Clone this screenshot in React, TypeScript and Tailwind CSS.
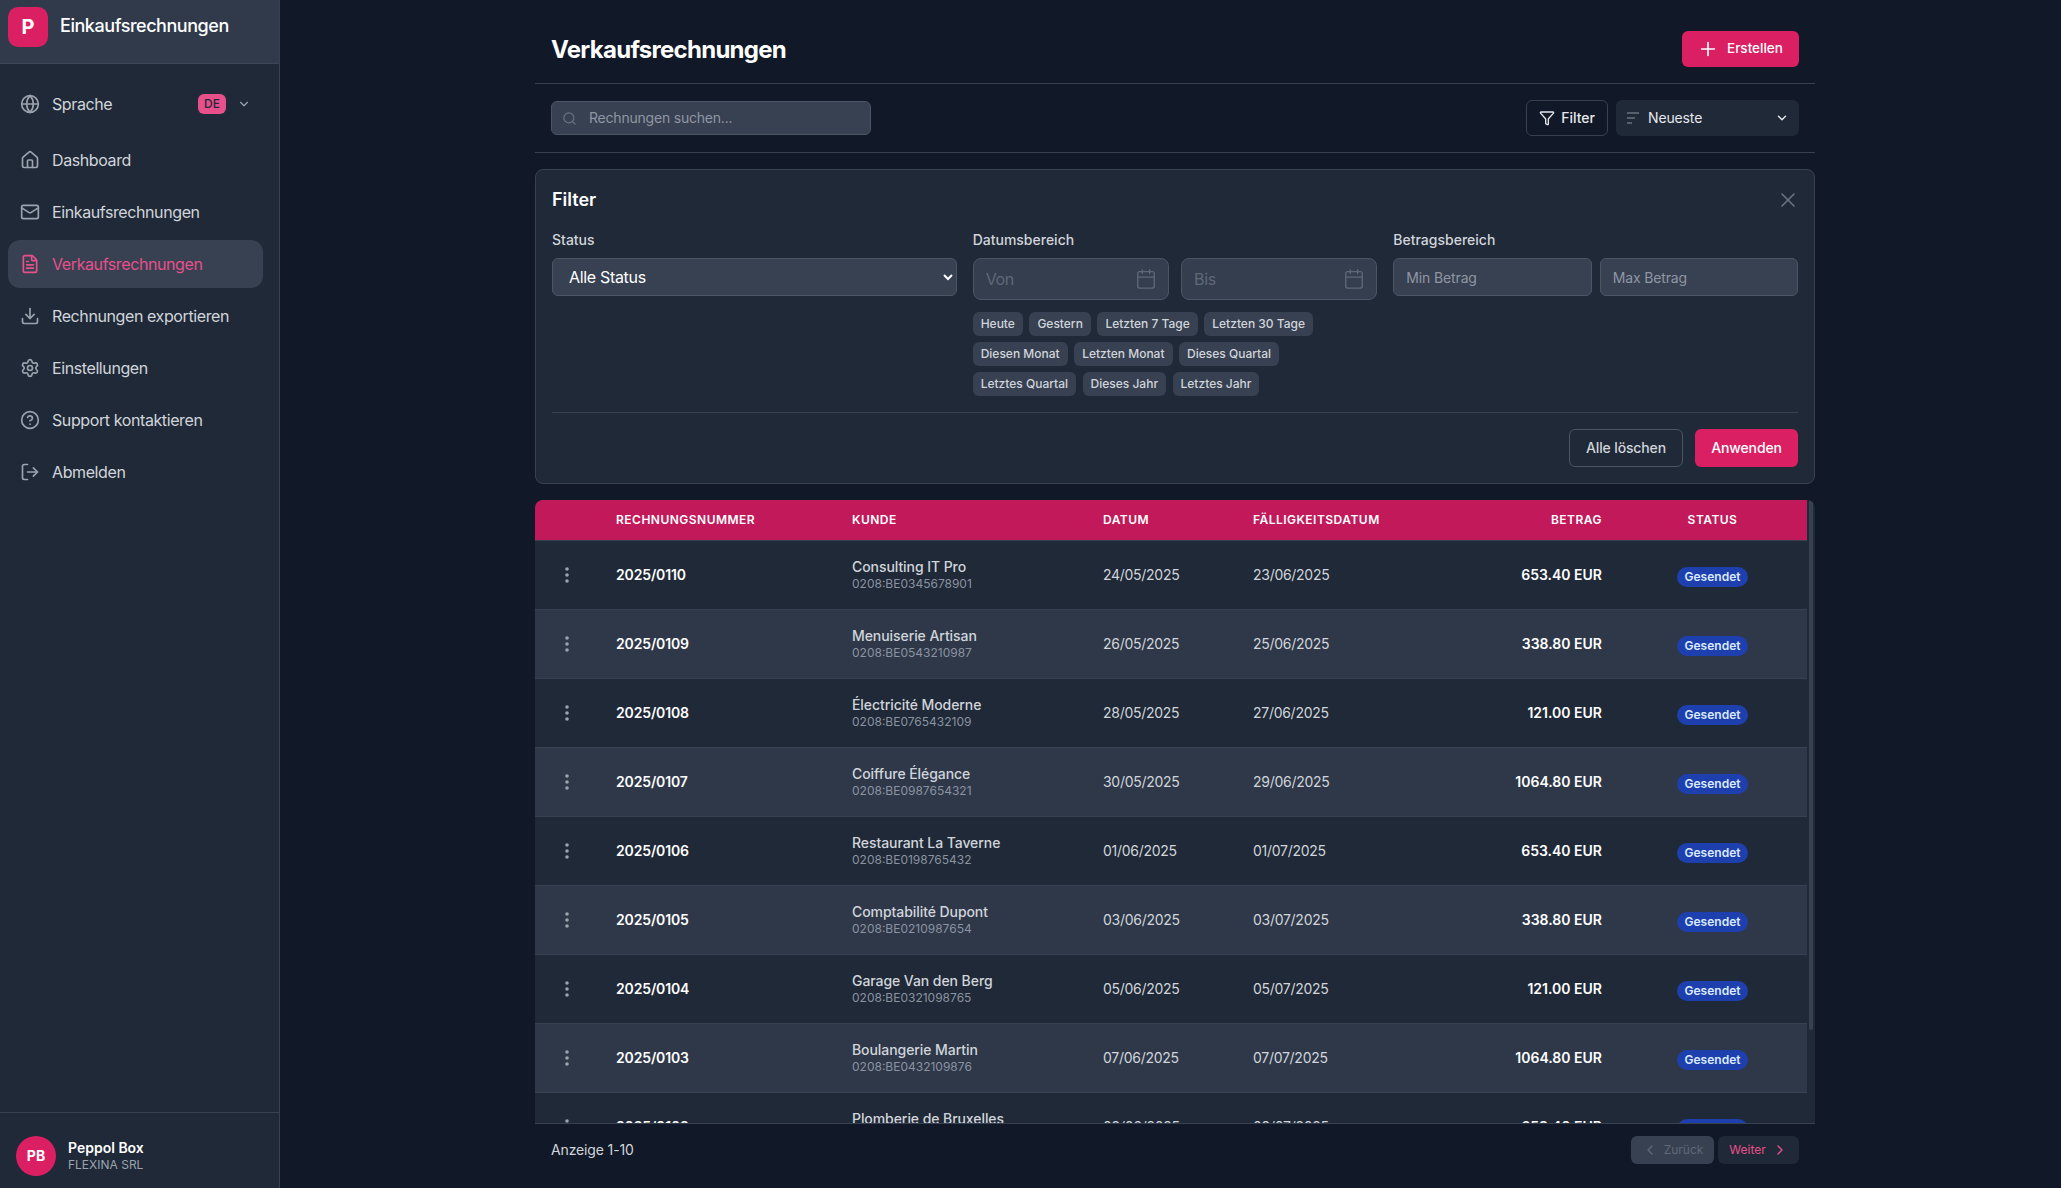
import {
  Calendar,
  ChevronDown,
  ChevronLeft,
  ChevronRight,
  CircleHelp,
  Download,
  FileText,
  Filter,
  Globe,
  Home,
  LogOut,
  Mail,
  Plus,
  Search,
  Settings,
  X,
} from "lucide-react"

const navItems = [
  { label: "Dashboard", icon: Home },
  { label: "Einkaufsrechnungen", icon: Mail },
  { label: "Verkaufsrechnungen", icon: FileText, active: true },
  { label: "Rechnungen exportieren", icon: Download },
  { label: "Einstellungen", icon: Settings },
  { label: "Support kontaktieren", icon: CircleHelp },
  { label: "Abmelden", icon: LogOut },
]

const chips = [
  "Heute",
  "Gestern",
  "Letzten 7 Tage",
  "Letzten 30 Tage",
  "Diesen Monat",
  "Letzten Monat",
  "Dieses Quartal",
  "Letztes Quartal",
  "Dieses Jahr",
  "Letztes Jahr",
]

const invoices = [
  ["2025/0110", "Consulting IT Pro", "0208:BE0345678901", "24/05/2025", "23/06/2025", "653.40 EUR"],
  ["2025/0109", "Menuiserie Artisan", "0208:BE0543210987", "26/05/2025", "25/06/2025", "338.80 EUR"],
  ["2025/0108", "Électricité Moderne", "0208:BE0765432109", "28/05/2025", "27/06/2025", "121.00 EUR"],
  ["2025/0107", "Coiffure Élégance", "0208:BE0987654321", "30/05/2025", "29/06/2025", "1064.80 EUR"],
  ["2025/0106", "Restaurant La Taverne", "0208:BE0198765432", "01/06/2025", "01/07/2025", "653.40 EUR"],
  ["2025/0105", "Comptabilité Dupont", "0208:BE0210987654", "03/06/2025", "03/07/2025", "338.80 EUR"],
  ["2025/0104", "Garage Van den Berg", "0208:BE0321098765", "05/06/2025", "05/07/2025", "121.00 EUR"],
  ["2025/0103", "Boulangerie Martin", "0208:BE0432109876", "07/06/2025", "07/07/2025", "1064.80 EUR"],
  ["2025/0102", "Plomberie de Bruxelles", "0208:BE0543210765", "09/06/2025", "09/07/2025", "653.40 EUR"],
]

function Sidebar() {
  return (
    <aside className="flex h-full w-[280px] shrink-0 flex-col border-r border-[#374151] bg-[#1f2937]">
      {/* Brand */}
      <div className="flex h-[64px] items-start gap-3 border-b border-[#3d4757] bg-[#303a4b] pl-2 pt-[7px]">
        <div className="flex h-10 w-10 items-center justify-center rounded-[10px] bg-[#db1f63] text-xl font-bold text-white">
          P
        </div>
        <span className="text-lg leading-[38px] font-medium tracking-[-0.025em] text-white">Einkaufsrechnungen</span>
      </div>

      <nav className="flex flex-1 flex-col pt-4 pl-2 pr-4">
        <div className="mb-2 flex h-12 items-center gap-3 px-3 text-[#d1d5db]">
          <Globe size={20} className="text-[#9ca3af]" />
          <span className="flex-1 text-base tracking-[-0.025em]">Sprache</span>
          <span className="rounded-md bg-[#e8508c] px-1.5 py-0.5 text-xs font-medium text-[#1f2937]">DE</span>
          <ChevronDown size={14} className="-ml-[1px] text-[#9ca3af]" />
        </div>
        <div className="flex flex-col gap-1">
          {navItems.map(({ label, icon: Icon, active }) => (
            <div
              key={label}
              className={
                active
                  ? "flex h-12 items-center gap-3 rounded-xl bg-[#374151] px-3 text-[#e8508c]"
                  : "flex h-12 items-center gap-3 rounded-xl px-3 text-[#d1d5db]"
              }
            >
              <Icon size={20} className={active ? "text-[#e8508c]" : "text-[#9ca3af]"} />
              <span className="text-base tracking-[-0.025em]">{label}</span>
            </div>
          ))}
        </div>
      </nav>

      {/* User */}
      <div className="flex h-[76px] items-start gap-3 border-t border-[#374151] px-4 pt-[23px]">
        <div className="flex h-10 w-10 items-center justify-center rounded-full bg-[#db1f63] text-sm font-bold text-white">
          PB
        </div>
        <div className="flex flex-col pt-[3px]">
          <span className="text-sm leading-[18px] font-semibold text-white">Peppol Box</span>
          <span className="text-xs leading-[16px] text-[#9ca3af]">FLEXINA SRL</span>
        </div>
      </div>
    </aside>
  )
}

function FilterPanel() {
  return (
    <section className="mt-4 rounded-lg border border-[#374151] bg-[#1f2937] p-4">
      <div className="mb-4 flex h-7 items-center justify-between">
        <h2 className="text-lg font-semibold text-white">Filter</h2>
        <X size={24} strokeWidth={1.6} className="-mr-0.5 text-[#6b7280]" />
      </div>
      <div className="grid grid-cols-3 gap-4">
        <div>
          <label className="mb-2 block text-sm font-medium text-[#d1d5db]">Status</label>
          <select className="h-[38px] w-full rounded-md border border-[#4b5563] bg-[#374151] px-3 text-base tracking-[-0.02em] text-white">
            <option>Alle Status</option>
          </select>
        </div>
        <div>
          <label className="mb-2 block text-sm font-medium text-[#d1d5db]">Datumsbereich</label>
          <div className="grid grid-cols-2 gap-3">
            {["Von", "Bis"].map((p) => (
              <div
                key={p}
                className="flex h-[42px] items-center rounded-lg border border-[#4b5563] bg-[#343e4f] pl-3 pr-[11px]"
              >
                <input
                  placeholder={p}
                  className="w-full min-w-0 bg-transparent text-base tracking-[-0.02em] outline-none placeholder:text-[#5f6877]"
                />
                <Calendar size={22} strokeWidth={1.5} className="shrink-0 text-[#5f6877]" />
              </div>
            ))}
          </div>
          <div className="mt-3 flex flex-wrap gap-x-[6.5px] gap-y-1.5">
            {chips.map((c) => (
              <span
                key={c}
                className="flex h-6 items-center rounded-md bg-[#374151] px-2 text-xs font-medium text-[#d1d5db]"
              >
                {c}
              </span>
            ))}
          </div>
        </div>
        <div>
          <label className="mb-2 block text-sm font-medium text-[#d1d5db]">Betragsbereich</label>
          <div className="grid grid-cols-2 gap-2">
            {["Min Betrag", "Max Betrag"].map((p) => (
              <input
                key={p}
                placeholder={p}
                className="h-[38px] w-full min-w-0 rounded-md border border-[#4b5563] bg-[#374151] px-3 text-sm tracking-[-0.01em] outline-none placeholder:text-[#8f96a3]"
              />
            ))}
          </div>
        </div>
      </div>
      <div className="mt-4 flex justify-end gap-3 border-t border-[#374151] pt-4">
        <button className="h-[38px] w-[114px] rounded-md border border-[#4b5563] text-sm font-medium tracking-[-0.01em] text-[#d1d5db]">
          Alle löschen
        </button>
        <button className="h-[38px] w-[103px] rounded-md bg-[#db1f63] text-sm font-medium tracking-[-0.01em] text-white">
          Anwenden
        </button>
      </div>
    </section>
  )
}

function RowMenu() {
  return (
    <svg width="4" height="16" viewBox="0 0 4 16" className="ml-[2px] fill-[#9ca3af]">
      <circle cx="2" cy="2" r="1.8" />
      <circle cx="2" cy="8" r="1.8" />
      <circle cx="2" cy="14" r="1.8" />
    </svg>
  )
}

function InvoiceTable() {
  return (
    <div className="mt-4 flex min-h-0 flex-1 overflow-hidden rounded-t-lg border-b border-[#374151] bg-[#1f2937]">
      <div className="min-w-0 flex-1 overflow-hidden">
        <table className="w-full table-fixed border-separate border-spacing-0">
          <colgroup>
            <col className="w-[65px]" />
            <col className="w-[236px]" />
            <col className="w-[251px]" />
            <col className="w-[150px]" />
            <col className="w-[166px]" />
            <col className="w-[215px]" />
            <col />
          </colgroup>
          <thead>
            <tr className="bg-[#c2195a] text-xs font-semibold tracking-[0.04em] text-white uppercase">
              <th className="h-[41px] border-b border-[#374151]" />
              <th className="h-[41px] border-b border-[#374151] px-4 text-left font-semibold">Rechnungsnummer</th>
              <th className="h-[41px] border-b border-[#374151] px-4 text-left font-semibold">Kunde</th>
              <th className="h-[41px] border-b border-[#374151] px-4 text-left font-semibold">Datum</th>
              <th className="h-[41px] border-b border-[#374151] px-4 text-left font-semibold whitespace-nowrap">
                Fälligkeitsdatum
              </th>
              <th className="h-[41px] border-b border-[#374151] px-4 text-right font-semibold">Betrag</th>
              <th className="h-[41px] border-b border-[#374151] px-4 text-center font-semibold">Status</th>
            </tr>
          </thead>
          <tbody>
            {invoices.map(([nr, name, id, date, due, amount], i) => (
              <tr key={nr} className={i % 2 === 0 ? "bg-[#1f2937]" : "bg-[#2e3849]"}>
                <td className="h-[69px] border-b border-[#374151] pl-[28px]">
                  <RowMenu />
                </td>
                <td className="h-[69px] border-b border-[#374151] px-4 text-sm font-semibold tracking-[-0.01em] text-white">
                  {nr}
                </td>
                <td className="h-[69px] border-b border-[#374151] px-4">
                  <div className="text-sm leading-[18px] font-medium tracking-[-0.005em] text-[#d1d5db]">{name}</div>
                  <div className="text-xs leading-[16px] text-[#8b93a0]">{id}</div>
                </td>
                <td className="h-[69px] border-b border-[#374151] px-4 text-sm tracking-[-0.02em] text-[#d1d5db]">
                  {date}
                </td>
                <td className="h-[69px] border-b border-[#374151] px-4 text-sm tracking-[-0.02em] text-[#d1d5db]">
                  {due}
                </td>
                <td className="h-[69px] border-b border-[#374151] px-4 text-right text-sm font-semibold text-white">
                  {amount}
                </td>
                <td className="h-[69px] border-b border-[#374151] px-4 text-center">
                  <span className="mt-1 inline-flex h-5 items-center rounded-full bg-[#1e40af] px-2 text-xs font-semibold text-[#dbeafe]">
                    Gesendet
                  </span>
                </td>
              </tr>
            ))}
          </tbody>
        </table>
      </div>
      {/* Scrollbar */}
      <div className="w-2 shrink-0 pl-0.5 pr-0.5">
        <div className="h-[530px] rounded-full bg-[#374151]" />
      </div>
    </div>
  )
}

export default function App() {
  return (
    <div className="flex h-screen overflow-hidden bg-[#111827] font-['Inter',sans-serif]">
      <Sidebar />
      <main className="ml-[255px] flex h-full w-[1280px] shrink-0 flex-col">
        <header className="flex h-[84px] shrink-0 items-center justify-between border-b border-[#374151] pl-4 pr-4 pt-[14px]">
          <h1 className="pt-[2px] text-2xl font-bold tracking-[-0.03em] text-white">Verkaufsrechnungen</h1>
          <button className="flex h-9 w-[117px] items-center gap-2 rounded-md bg-[#db1f63] pl-[15px] text-[13.5px] font-medium text-white">
            <Plus size={22} strokeWidth={1.8} />
            Erstellen
          </button>
        </header>

        <div className="flex h-[69px] shrink-0 items-center justify-between border-b border-[#374151] px-4">
          <div className="flex h-[34px] w-[320px] items-center gap-3 rounded-md border border-[#4b5563] bg-[#374151] pl-2.5">
            <Search size={15} className="text-[#6b7280]" />
            <span className="text-sm tracking-[-0.015em] text-[#8f96a3]">Rechnungen suchen...</span>
          </div>
          <div className="flex items-center gap-2">
            <button className="flex h-9 items-center gap-1.5 rounded-md border border-[#374151] px-3 text-sm font-medium text-[#e5e7eb]">
              <Filter size={16} />
              Filter
            </button>
            <div className="flex h-9 w-[183px] items-center rounded-md bg-[#1f2937] pl-2.5 pr-2.5 text-sm tracking-[-0.01em] text-[#e5e7eb]">
              <svg width="14" height="14" viewBox="0 0 14 14" className="mr-2 text-[#6b7280]" stroke="currentColor" strokeWidth="1.7">
                <path d="M1 2h12M1 7h8M1 12h5" />
              </svg>
              <span className="flex-1">Neueste</span>
              <ChevronDown size={14} strokeWidth={2.5} />
            </div>
          </div>
        </div>

        <FilterPanel />
        <InvoiceTable />

        <footer className="flex h-[64px] shrink-0 items-start justify-between pl-4 pr-4 pt-3">
          <span className="text-sm leading-7 tracking-[-0.01em] text-[#d1d5db]">Anzeige 1-10</span>
          <div className="flex gap-1">
            <button className="flex h-7 w-[83px] items-center justify-center gap-1.5 rounded-md bg-[#374151] text-xs text-[#5f6877]">
              <ChevronLeft size={16} />
              Zurück
            </button>
            <button className="flex h-7 w-[81px] items-center justify-center gap-1.5 rounded-md bg-[#1f2937] text-xs text-[#e8508c]">
              Weiter
              <ChevronRight size={16} />
            </button>
          </div>
        </footer>
      </main>
    </div>
  )
}
